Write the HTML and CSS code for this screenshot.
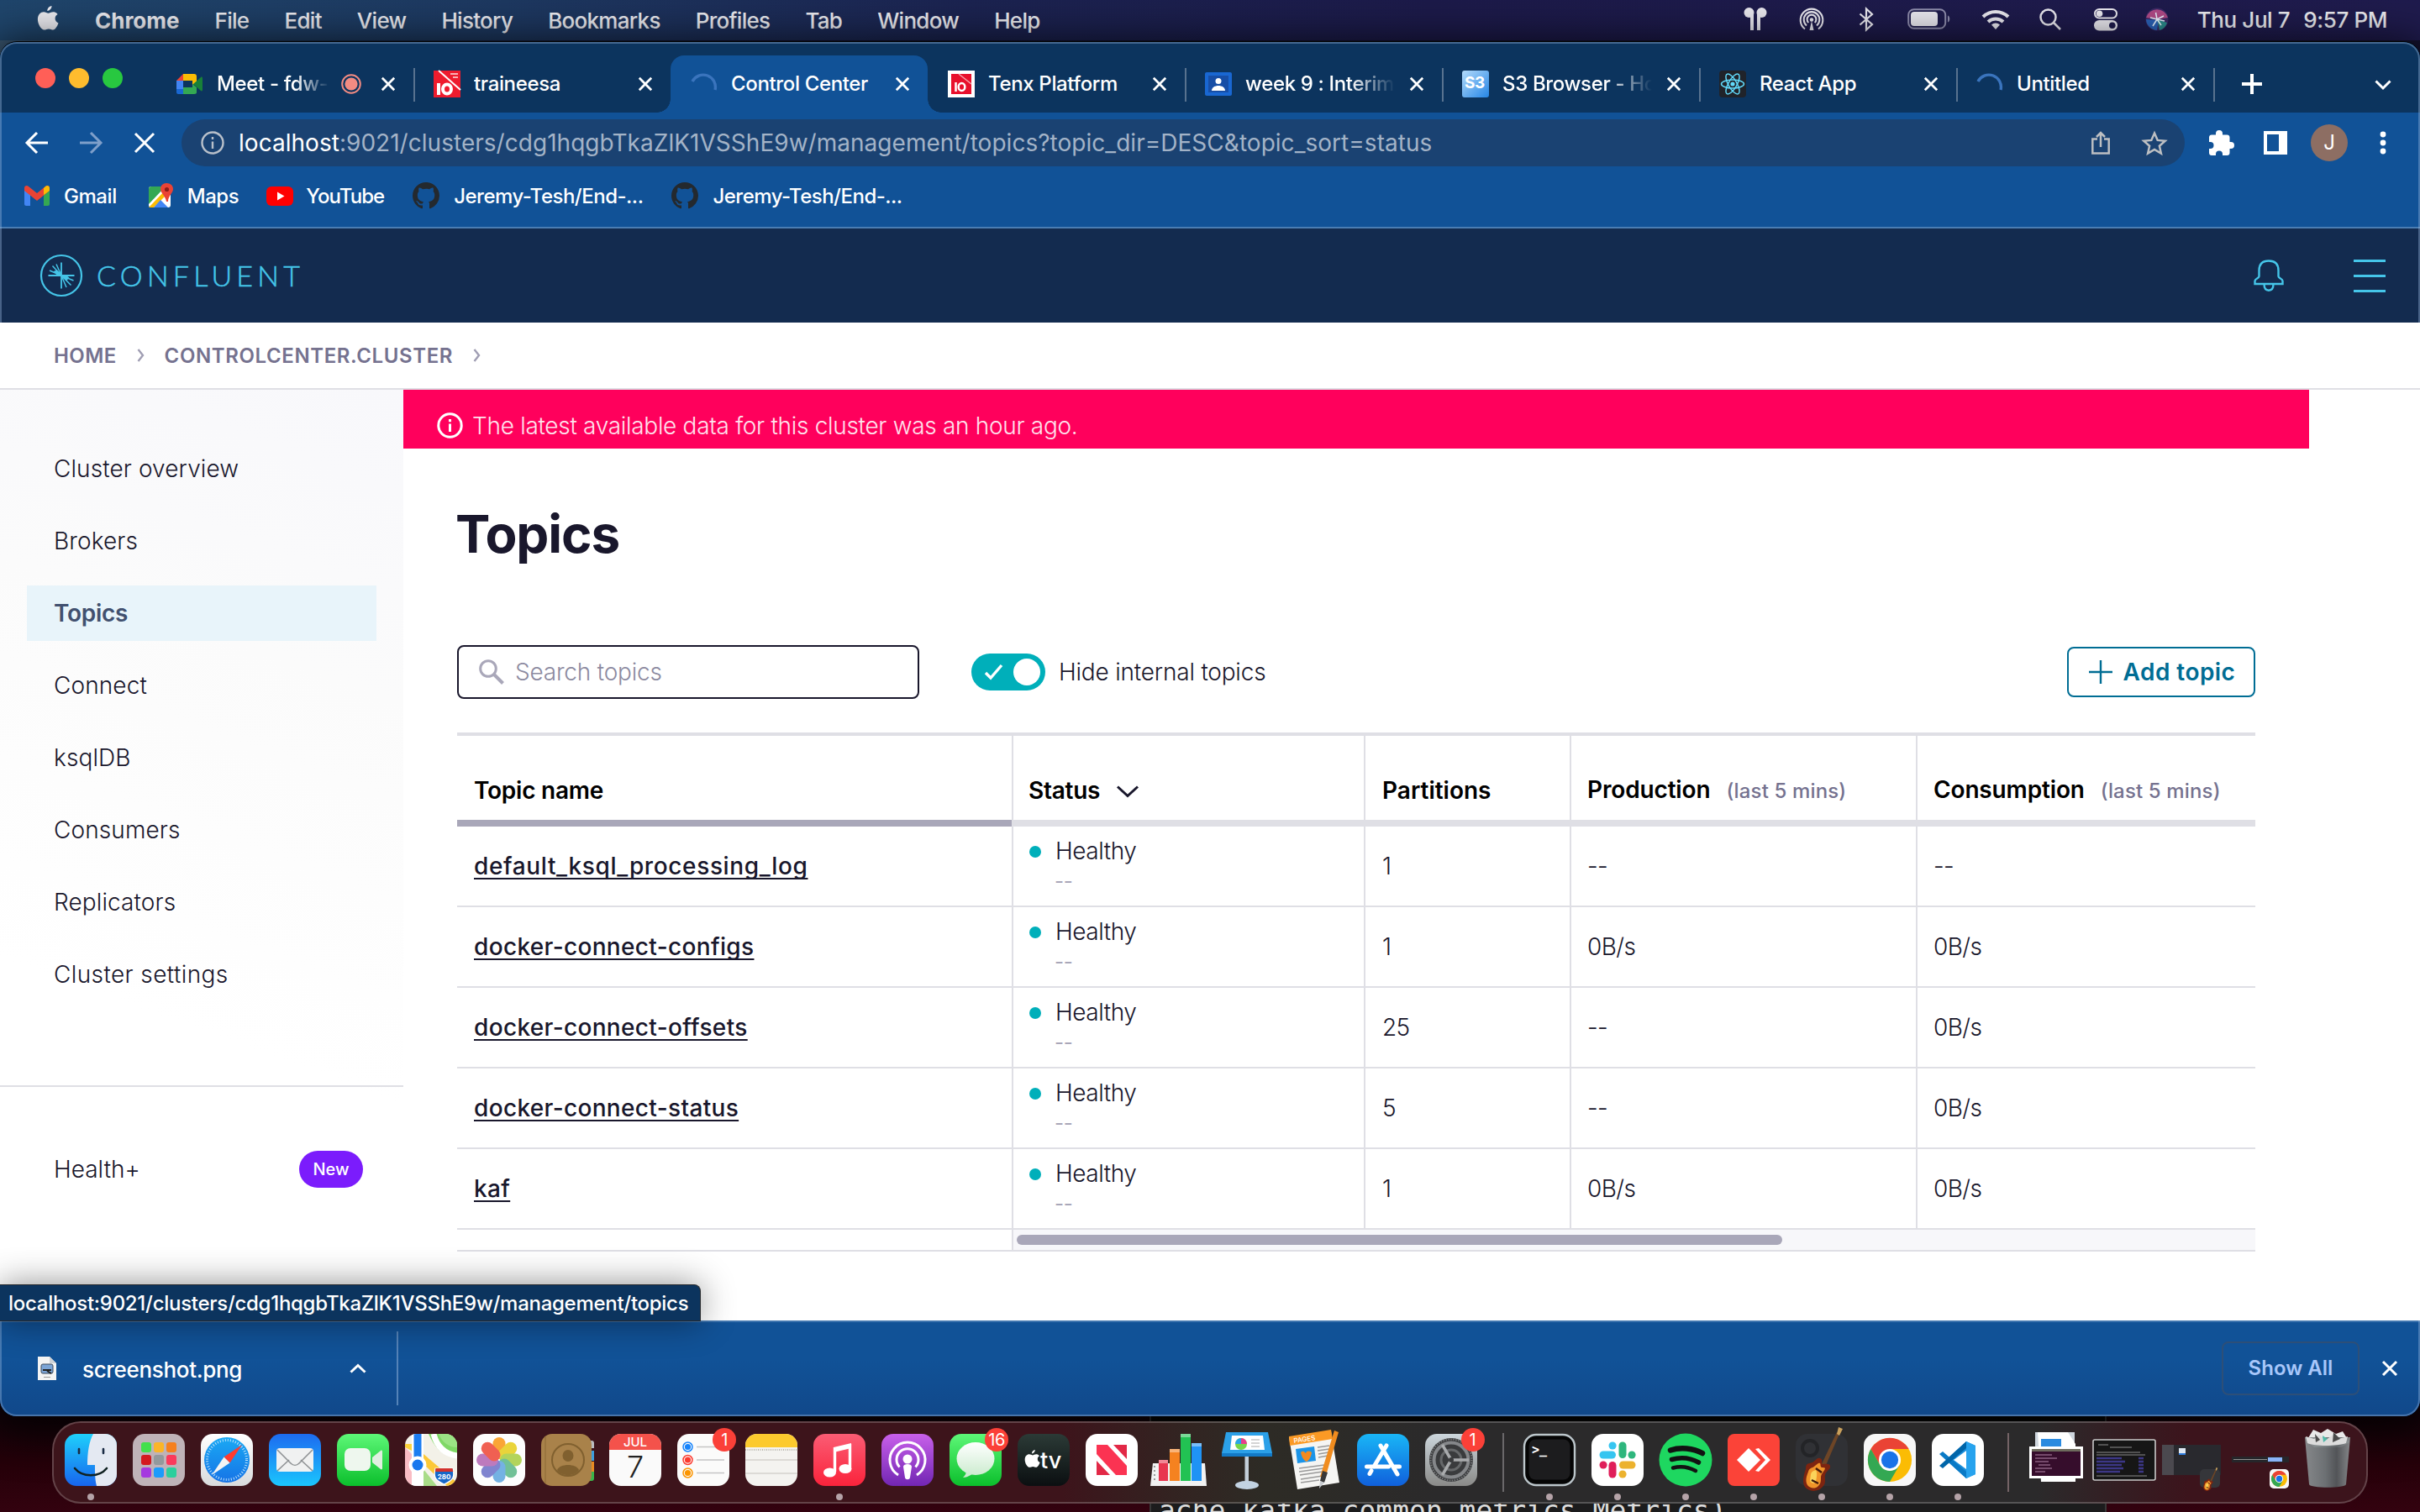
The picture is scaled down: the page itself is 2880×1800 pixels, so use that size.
FILE: index.html
```
<!DOCTYPE html>
<html lang="en">
<head>
<meta charset="utf-8">
<title>Control Center</title>
<link rel="stylesheet" href="styles.css">
</head>
<body>
<svg class="defs" width="0" height="0">
  <defs>
    <symbol id="x" viewBox="0 0 20 20"><path d="M2 2L18 18M18 2L2 18" stroke="currentColor" stroke-width="3" fill="none"/></symbol>
    <symbol id="github" viewBox="0 0 16 16"><path fill="#24292e" d="M8 0C3.58 0 0 3.58 0 8c0 3.54 2.29 6.53 5.47 7.59.4.07.55-.17.55-.38 0-.19-.01-.82-.01-1.49-2.01.37-2.53-.49-2.69-.94-.09-.23-.48-.94-.82-1.13-.28-.15-.68-.52-.01-.53.63-.01 1.08.58 1.23.82.72 1.21 1.87.87 2.33.66.07-.52.28-.87.51-1.07-1.78-.2-3.64-.89-3.64-3.95 0-.87.31-1.59.82-2.15-.08-.2-.36-1.02.08-2.12 0 0 .67-.21 2.2.82.64-.18 1.32-.27 2-.27s1.36.09 2 .27c1.53-1.04 2.2-.82 2.2-.82.44 1.1.16 1.92.08 2.12.51.56.82 1.27.82 2.15 0 3.07-1.87 3.75-3.65 3.95.29.25.54.73.54 1.48 0 1.07-.01 1.93-.01 2.2 0 .21.15.46.55.38A8.01 8.01 0 0 0 16 8c0-4.42-3.58-8-8-8z"/></symbol>
    <symbol id="spinner" viewBox="0 0 32 32"><path d="M2 13A14.5 14.5 0 0 1 29 23" stroke="#3a74bd" stroke-width="3.4" fill="none"/></symbol>
    <symbol id="apple" viewBox="0 0 26 32"><path fill="currentColor" d="M17.5 1c.2 2.900-2.400 6-5.200 6C12 4.200 14.700 1.300 17.500 1zM24.600 11c-2 1.200-3 2.800-3 5 0 2.600 1.500 4.500 3.900 5.500-.9 2.700-3.600 8-6.300 8-1.900 0-2.700-1.100-5.200-1.100s-3.400 1.100-5.200 1.100C4.700 29.500.9 22.500.9 17c0-5.500 3.500-8.700 7.100-8.700 2.300 0 4 1.400 5.500 1.400 1.300 0 3.200-1.500 6-1.500 1 0 3.500.2 5.100 2.800z"/></symbol>
    <symbol id="chrome" viewBox="0 0 60 60">
      <circle cx="30" cy="30" r="27" fill="#fbbc04"/>
      <path d="M6.600 16.500A27 27 0 0 1 53.400 16.500L30 16.500 18.300 36.800z" fill="#ea4335"/>
      <path d="M6.600 16.500L18.300 36.800 30 43.500 41.700 36.800 30 57A27 27 0 0 1 6.600 16.500z" fill="#34a853"/>
      <circle cx="30" cy="30" r="13.500" fill="#fff"/><circle cx="30" cy="30" r="10.500" fill="#1a73e8"/>
    </symbol>
    <symbol id="guitar" viewBox="0 0 60 76">
      <path d="M31 48L51 6l3 2-18 42z" fill="#6d4526"/><path d="M51 8l2-8 5 2-4 8z" fill="#c9a05c"/>
      <path d="M14 50c0-8 3-6 8-8 4-2 5-6 9-5 4 1 1 6 3 7 4 0 8-1 9 2 1 4-5 6-6 11-1 4 2 9-3 14-6 7-17 6-21 0-4-6-1-15 1-21z" fill="#7d2410"/>
      <path d="M17 53c1-5 5-4 8-7 3-2 4-4 6-3 1 1 0 4 2 5 2 0 4 0 4 1-1 4-5 6-5 11 0 4 0 7-3 10-4 4-10 3-13-1-3-5-1-11 1-16z" fill="#f0942a"/>
      <path d="M20 56c1-4 4-4 6-5 2 3 1 9 0 14-2 3-5 2-7-1z" fill="#fbd45a"/>
      <path d="M26 49l7 5M21 63l8 4" stroke="#3f1a0c" stroke-width="2.500"/>
    </symbol>
    <linearGradient id="g-finder" x2="0" y2="1"><stop stop-color="#1fd0fb"/><stop offset="1" stop-color="#1765ee"/></linearGradient>
    <linearGradient id="g-mail" x2="0" y2="1"><stop stop-color="#1d6bf0"/><stop offset="1" stop-color="#1bc6fd"/></linearGradient>
    <linearGradient id="g-green" x2="0" y2="1"><stop stop-color="#5df777"/><stop offset="1" stop-color="#0bbf2c"/></linearGradient>
    <linearGradient id="g-white" x2="0" y2="1"><stop stop-color="#fff"/><stop offset="1" stop-color="#d9dbdc"/></linearGradient>
    <linearGradient id="g-music" x2="0" y2="1"><stop stop-color="#fb5c74"/><stop offset="1" stop-color="#fa233b"/></linearGradient>
    <linearGradient id="g-pod" x2="0" y2="1"><stop stop-color="#c860ea"/><stop offset="1" stop-color="#7226b3"/></linearGradient>
    <linearGradient id="g-tv" x2="0" y2="1"><stop stop-color="#2b3a36"/><stop offset="1" stop-color="#0b0f11"/></linearGradient>
    <linearGradient id="g-store" x2="0" y2="1"><stop stop-color="#19b6f6"/><stop offset="1" stop-color="#1060dc"/></linearGradient>
    <linearGradient id="g-pref" x2="0" y2="1"><stop stop-color="#ccd6dc"/><stop offset="1" stop-color="#8a8a88"/></linearGradient>
    <linearGradient id="g-safari" x2="0" y2="1"><stop stop-color="#1aa9f4"/><stop offset="1" stop-color="#1673e6"/></linearGradient>
    <linearGradient id="g-bubble" x2="0" y2="1"><stop stop-color="#fff"/><stop offset="1" stop-color="#cdecd0"/></linearGradient>
    <linearGradient id="g-trash" x2="1" y2="0"><stop stop-color="#8b9092"/><stop offset=".45" stop-color="#70777a"/><stop offset=".7" stop-color="#54595c"/><stop offset="1" stop-color="#8b9092"/></linearGradient>
    <linearGradient id="g-s3" x2="1" y2="1"><stop stop-color="#b4dbfb"/><stop offset="1" stop-color="#2586e6"/></linearGradient>
    <clipPath id="tile"><rect width="62" height="62" rx="14"/></clipPath>
  </defs>
</svg>

<header class="menubar">
  <nav class="menubar-left">
    <svg class="apple" width="26" height="32"><use href="#apple"/></svg>
    <span class="app-name">Chrome</span><span>File</span><span>Edit</span><span>View</span><span>History</span><span>Bookmarks</span><span>Profiles</span><span>Tab</span><span>Window</span><span>Help</span>
  </nav>
  <div class="menubar-right">
    <svg class="airpods" width="28" height="28" viewBox="0 0 28 28" fill="#e9e8ef"><ellipse cx="6.500" cy="6" rx="6" ry="6"/><ellipse cx="21.500" cy="6" rx="6" ry="6"/><path d="M8 8h4v19H8zM16 8h4v19h-4z"/></svg>
    <svg class="airdrop" width="30" height="28" viewBox="0 0 30 28" fill="none" stroke="#e9e8ef" stroke-width="2.100"><path d="M7 25.500A13.300 13.300 0 1 1 23 25.500M9 21.500A9.300 9.300 0 1 1 21 21.500M11.300 18A5.400 5.400 0 1 1 18.700 18"/><path d="M12.500 27l2.500-11 2.500 11z" fill="#e9e8ef" stroke="none"/><circle cx="15" cy="14.500" r="2.200" fill="#e9e8ef" stroke="none"/></svg>
    <svg class="bluetooth" width="18" height="28" viewBox="0 0 18 28" fill="none" stroke="#e9e8ef" stroke-width="2.200"><path d="M1.500 7.500L16 20 9 26.500V1.500L16 8 1.500 20.500"/></svg>
    <svg class="battery" width="52" height="26" viewBox="0 0 52 26"><rect x="1.200" y="1.200" width="44" height="22.600" rx="6.500" fill="none" stroke="#8f8dad" stroke-width="2"/><rect x="4" y="4" width="32" height="17" rx="4" fill="#e9e8ef"/><path d="M48 8.500c3 1 3 7 0 8z" fill="#8f8dad"/></svg>
    <svg class="wifi" width="34" height="24" viewBox="0 0 34 24" fill="none" stroke="#e9e8ef" stroke-width="4"><path d="M2 9A21.500 21.500 0 0 1 32 9"/><path d="M8 15A13 13 0 0 1 26 15"/><path d="M12 18.500L17 24l5-5.500a7.500 7.500 0 0 0-10 0z" fill="#e9e8ef" stroke="none"/></svg>
    <svg class="spotlight" width="26" height="26" viewBox="0 0 26 26" fill="none" stroke="#e9e8ef" stroke-width="2.500"><circle cx="10.500" cy="10.500" r="9"/><path d="M17 17l8 8"/></svg>
    <svg class="switches" width="28" height="27" viewBox="0 0 28 27"><rect x="1" y="1" width="26" height="10.500" rx="5.200" fill="none" stroke="#e9e8ef" stroke-width="2"/><circle cx="6.500" cy="6.200" r="3.800" fill="#e9e8ef"/><rect y="14" width="28" height="12.500" rx="6.200" fill="#e9e8ef"/><circle cx="21.800" cy="20.200" r="3.800" fill="#1e1b4c"/></svg>
    <svg width="28" height="28" viewBox="0 0 28 28"><circle cx="14" cy="14" r="13.500" fill="#3c2a66"/><path d="M1 12A13.500 13.500 0 0 1 27 12L14 14z" fill="#b04a86"/><path d="M1 14a13.500 13.500 0 0 0 13 13l2-12z" fill="#2a62b8"/><path d="M14 14l12 4a13 13 0 0 1-9 9z" fill="#2b8c8c"/><path d="M6 12l8 2 8-4M14 14l-5 8M14 14l5 7M12.500 6l1.500 8 9 2" stroke="#e9f3ff" stroke-width="1.500" fill="none"/></svg>
    <span class="clock"><span>Thu Jul 7</span><span>9:57 PM</span></span>
  </div>
</header>

<div class="terminal-window"><span>ache.kafka.common.metrics.Metrics)</span></div>

<div class="window">
  <div class="tabstrip">
    <div class="lights"><i class="red"></i><i class="yellow"></i><i class="green"></i></div>
    <div class="tab"><svg class="fav" viewBox="0 0 32 32"><path d="M0 12l8-8v8z" fill="#ea4335"/><path d="M8 4h13c2 0 3 1 3 3v7l-5 3v-5H8z" fill="#fbbc04"/><path d="M0 12h8v12H0z" fill="#4285f4"/><path d="M0 22h8v6H2c-1 0-2-1-2-2z" fill="#1967d2"/><path d="M8 20h11v-4l5 4v6c0 1-1 2-3 2H8z" fill="#34a853"/><path d="M20 16l9-8c1-1 2 0 2 1v14c0 1-1 2-2 1z" fill="#188038"/></svg><span class="tab-title t-meet">Meet - fdw-</span><svg class="rec" viewBox="0 0 24 24"><circle cx="12" cy="12" r="10.800" fill="none" stroke="#f28b82" stroke-width="2"/><circle cx="12" cy="12" r="7.600" fill="#f28b82"/></svg><svg class="close"><use href="#x"/></svg></div>
    <div class="tab sep"><svg class="fav" viewBox="0 0 32 32"><rect width="32" height="32" fill="#ee1c2e"/><path d="M6 0l26 23" stroke="#fff" stroke-width="2"/><path d="M6 15v14" stroke="#fff" stroke-width="4"/><ellipse cx="16" cy="22" rx="5" ry="5.500" fill="none" stroke="#fff" stroke-width="4"/><path d="M20 4h9M23 8h6" stroke="#f9b0b5" stroke-width="2"/></svg><span class="tab-title">traineesa</span><svg class="close"><use href="#x"/></svg></div>
    <div class="tab active"><svg class="fav"><use href="#spinner"/></svg><span class="tab-title">Control Center</span><svg class="close"><use href="#x"/></svg></div>
    <div class="tab"><svg class="fav" viewBox="0 0 32 32"><rect width="32" height="32" fill="#fff"/><rect x="4" y="4" width="24" height="24" fill="#e8102c"/><path d="M13 4l15 12" stroke="#f7a3ac" stroke-width="1.500"/><path d="M9.500 14v11" stroke="#fff" stroke-width="2.500"/><ellipse cx="16.500" cy="19.500" rx="3.800" ry="4.500" fill="none" stroke="#fff" stroke-width="2.500"/></svg><span class="tab-title">Tenx Platform</span><svg class="close"><use href="#x"/></svg></div>
    <div class="tab sep"><svg class="fav" viewBox="0 0 32 32"><rect y="2" width="32" height="28" rx="2" fill="#1967d2"/><rect x="4" y="6" width="24" height="20" fill="#174ea6"/><circle cx="16" cy="12.500" r="3.500" fill="#fff"/><path d="M8 24c0-8 16-8 16 0z" fill="#fff"/></svg><span class="tab-title fade">week 9 : Interim</span><svg class="close"><use href="#x"/></svg></div>
    <div class="tab sep"><svg class="fav" viewBox="0 0 32 32"><rect width="32" height="32" rx="3" fill="url(#g-s3)"/><text x="15" y="21" text-anchor="middle" class="s3">S3</text></svg><span class="tab-title fade">S3 Browser - Ho</span><svg class="close"><use href="#x"/></svg></div>
    <div class="tab sep"><svg class="fav" viewBox="0 0 32 32"><rect width="32" height="32" rx="4" fill="#20232a"/><g fill="none" stroke="#61dafb" stroke-width="1.500"><ellipse cx="16" cy="16" rx="13.500" ry="5"/><ellipse cx="16" cy="16" rx="13.500" ry="5" transform="rotate(60 16 16)"/><ellipse cx="16" cy="16" rx="13.500" ry="5" transform="rotate(120 16 16)"/></g><circle cx="16" cy="16" r="2.600" fill="#61dafb"/></svg><span class="tab-title">React App</span><svg class="close"><use href="#x"/></svg></div>
    <div class="tab sep last"><svg class="fav"><use href="#spinner"/></svg><span class="tab-title">Untitled</span><svg class="close"><use href="#x"/></svg></div>
    <svg class="newtab" width="24" height="24" viewBox="0 0 24 24"><path d="M12 0v24M0 12h24" stroke="#fff" stroke-width="4"/></svg>
    <svg class="tabmenu" width="20" height="12" viewBox="0 0 20 12"><path d="M1.500 1.500L10 10l8.500-8.500" stroke="#fff" stroke-width="3" fill="none"/></svg>
  </div>

  <div class="toolbar">
    <svg width="28" height="28" viewBox="0 0 28 28" fill="none" stroke="#fff" stroke-width="3"><path d="M27 14H3M14 2L2 14l12 12"/></svg>
    <svg width="28" height="28" viewBox="0 0 28 28" fill="none" stroke="#7f9fca" stroke-width="3"><path d="M1 14h24M14 2l12 12-12 12"/></svg>
    <svg width="26" height="26" viewBox="0 0 26 26" fill="none" stroke="#fff" stroke-width="3"><path d="M2 2l22 22M24 2L2 24"/></svg>
    <div class="omnibox">
      <svg width="28" height="28" viewBox="0 0 28 28" fill="none" stroke="#b9c0ca" stroke-width="2.400"><circle cx="14" cy="14" r="12.500"/><path d="M14 12.500V21M14 7v3"/></svg>
      <span class="url"><b>localhost</b>:9021/clusters/cdg1hqgbTkaZlK1VSShE9w/management/topics?topic_dir=DESC&amp;topic_sort=status</span>
      <svg width="22" height="28" viewBox="0 0 22 28" fill="none" stroke="#bdbfc2" stroke-width="2.500"><path d="M7 9.500H1.300v17h19.400v-17H15M11 19V2M6 7l5-5 5 5"/></svg>
      <svg width="30" height="28" viewBox="0 0 30 28" fill="none" stroke="#bdbfc2" stroke-width="2.500"><path d="M15 2.500l3.700 8.400 9 .8-6.800 6 2 8.900L15 21.900l-7.900 4.700 2-8.900-6.800-6 9-.8z"/></svg>
    </div>
    <svg class="puzzle" width="30" height="30" viewBox="0 0 30 30"><path fill="#fff" d="M27 14h-1.500V8.500c0-1.700-1.300-3-3-3H17V4a4 4 0 0 0-8 0v1.500H4c-1.700 0-3 1.300-3 3V14h1.500a4 4 0 0 1 0 8H1v5c0 1.700 1.300 3 3 3h5v-1.500a4 4 0 0 1 8 0V30h5.500c1.700 0 3-1.300 3-3v-5H27a4 4 0 0 0 0-8z"/></svg>
    <svg width="28" height="28" viewBox="0 0 28 28"><path fill="#fff" fill-rule="evenodd" d="M0 0h28v28H0zM4 4v20h14V4z"/></svg>
    <span class="avatar">J</span>
    <svg class="kebab" width="8" height="28" viewBox="0 0 8 28" fill="#fff"><circle cx="4" cy="4" r="3.400"/><circle cx="4" cy="14" r="3.400"/><circle cx="4" cy="24" r="3.400"/></svg>
  </div>

  <div class="bookmarks">
    <a><svg width="30" height="24" viewBox="0 0 30 24"><path d="M0 4v18c0 1 1 2 2 2h5V11z" fill="#4285f4"/><path d="M30 4v18c0 1-1 2-2 2h-5V11z" fill="#34a853"/><path d="M0 3c0-3 3-4 5-2l10 8L25 1c2-2 5-1 5 2v3L15 18 0 6z" fill="#ea4335"/><path d="M23 3l2-2c2-2 5-1 5 2v3l-7 5z" fill="#fbbc04"/></svg>Gmail</a>
    <a class="maps"><svg width="30" height="30" viewBox="0 0 30 30"><rect y="4" width="26" height="25" rx="3" fill="#fff"/><path d="M0 7c0-2 1-3 3-3h17L0 25z" fill="#34a853"/><path d="M0 29L22 6l3 4L6 29z" fill="#fbbc04"/><path d="M6 29l8-9 9 9z" fill="#4285f4"/><path d="M21 0c5 0 8 3 8 7 0 5-6 8-6 15h-2c-1-7-7-10-7-15 0-4 3-7 7-7z" fill="#ea4335"/><circle cx="21.500" cy="7.500" r="2.600" fill="#8c1d18"/></svg>Maps</a>
    <a class="youtube"><svg width="32" height="23" viewBox="0 0 32 23"><rect width="32" height="23" rx="6" fill="#f00"/><path d="M13 6.500v10l8.500-5z" fill="#fff"/></svg>YouTube</a>
    <a class="repo"><svg width="32" height="32"><use href="#github"/></svg>Jeremy-Tesh/End-...</a>
    <a class="repo"><svg width="32" height="32"><use href="#github"/></svg>Jeremy-Tesh/End-...</a>
  </div>

  <div class="app-header">
    <svg width="50" height="50" viewBox="0 0 50 50" fill="none" stroke="#45c5e8"><circle cx="25" cy="25" r="24" stroke-width="2.200"/><g stroke-width="1.800"><path d="M25 9.500v31M9.500 25h31"/><path d="M25 25L19 11.500M25 25L14.500 13.500M25 25L11 19M25 25L31 39M25 25L36.500 36.500M25 25l14.500 6" stroke-width="1.500"/></g><path d="M25 25l-5-6.500-4.500 1.500 4.500 5zM25 25l6 6.500 3.500-4-3.500-2.500z" fill="#45c5e8" stroke="none"/></svg>
    <span class="wordmark">CONFLUENT</span>
    <svg class="bell" width="36" height="38" viewBox="0 0 36 38" fill="none" stroke="#45c5e8" stroke-width="2.400"><path d="M6.500 20v-7C6.500 6 10 1.500 18 1.500S29.500 6 29.500 13v7c0 2.500 5 2.500 5 5.500V29h-33v-3.500c0-3 5-3 5-5.500z"/><path d="M12.500 29c0 5 2 7.700 5.500 7.700s5.500-2.700 5.500-7.700"/></svg>
    <span class="burger"><i></i><i></i><i></i></span>
  </div>
  <div class="crumbs">
    <span class="home">HOME</span><svg width="9" height="16" viewBox="0 0 9 16"><path d="M1.500 1l5.500 7-5.500 7" fill="none" stroke="#a09eb3" stroke-width="2.400"/></svg><span class="cluster">CONTROLCENTER.CLUSTER</span><svg width="9" height="16" viewBox="0 0 9 16"><path d="M1.500 1l5.500 7-5.500 7" fill="none" stroke="#a09eb3" stroke-width="2.400"/></svg>
  </div>

  <div class="page">
    <aside class="sidebar">
      <nav class="sidenav">
        <a>Cluster overview</a><a>Brokers</a><a class="current">Topics</a><a>Connect</a><a>ksqlDB</a><a>Consumers</a><a>Replicators</a><a class="settings">Cluster settings</a>
      </nav>
      <div class="health"><span>Health+</span><span class="badge">New</span></div>
    </aside>
    <main class="content">
      <div class="alert"><svg width="31" height="31" viewBox="0 0 31 31" fill="none" stroke="#fff" stroke-width="3"><circle cx="15.500" cy="15.500" r="13.700"/><path d="M15.500 13.500V23M15.500 8v3.200"/></svg><span>The latest available data for this cluster was an hour ago.</span></div>
      <h1>Topics</h1>
      <div class="controls">
        <div class="search"><svg width="30" height="30" viewBox="0 0 30 30" fill="none" stroke="#a9a7b9" stroke-width="3"><circle cx="11" cy="11" r="9.300"/><path d="M17.500 17.500L28.500 28.500" stroke-width="4"/></svg><span>Search topics</span></div>
        <div class="toggle"><svg width="24" height="20" viewBox="0 0 24 20"><path d="M2 11l6 6L21 2" fill="none" stroke="#fff" stroke-width="3.400"/></svg><i></i></div>
        <span class="toggle-label">Hide internal topics</span>
        <button class="add"><svg width="28" height="28" viewBox="0 0 28 28"><path d="M14 0v28M0 14h28" stroke="#006d94" stroke-width="2.400"/></svg>Add topic</button>
      </div>
      <div class="table">
        <div class="thead">
          <div class="name">Topic name</div><div>Status<svg class="sort" width="28" height="14" viewBox="0 0 28 14"><path d="M2 1.500l12 11 12-11" fill="none" stroke="#19172c" stroke-width="3"/></svg></div><div class="parts">Partitions</div><div>Production<small>(last 5 mins)</small></div><div>Consumption<small>(last 5 mins)</small></div>
        </div>
        <div class="row"><div><a class="long">default_ksql_processing_log</a></div><div class="status"><p>Healthy</p><small>--</small></div><div>1</div><div>--</div><div>--</div></div>
        <div class="row"><div><a>docker-connect-configs</a></div><div class="status"><p>Healthy</p><small>--</small></div><div>1</div><div>0B/s</div><div>0B/s</div></div>
        <div class="row"><div><a>docker-connect-offsets</a></div><div class="status"><p>Healthy</p><small>--</small></div><div>25</div><div>--</div><div>0B/s</div></div>
        <div class="row"><div><a>docker-connect-status</a></div><div class="status"><p>Healthy</p><small>--</small></div><div>5</div><div>--</div><div>0B/s</div></div>
        <div class="row"><div><a>kaf</a></div><div class="status"><p>Healthy</p><small>--</small></div><div>1</div><div>0B/s</div><div>0B/s</div></div>
        <div class="scroll"><div class="track"><i></i></div></div>
      </div>
    </main>
    <div class="link-status">localhost:9021/clusters/cdg1hqgbTkaZlK1VSShE9w/management/topics</div>
  </div>

  <footer class="downloads">
    <div class="download"><svg width="22" height="28" viewBox="0 0 22 28"><path d="M0 0h14l8 8v20H0z" fill="#f4f4f4"/><path d="M14 0l8 8h-8z" fill="#cfd2d6"/><rect x="4" y="9" width="14" height="11" rx="2" fill="#7ba4d6" stroke="#3d4a5c"/><path d="M6 16h10M11 17l5 3" stroke="#222" stroke-width="2"/><path d="M7 24.500h8" stroke="#999"/></svg><span>screenshot.png</span><svg class="up" width="20" height="12" viewBox="0 0 20 12"><path d="M1.500 10.500L10 2.500l8.500 8" stroke="#fff" stroke-width="3" fill="none"/></svg></div>
    <span class="show-all">Show All</span>
    <svg class="close-bar" width="20" height="20"><use href="#x"/></svg>
  </footer>
</div>

<div class="dock">
  <div class="app run"><svg viewBox="0 0 62 62"><g clip-path="url(#tile)"><rect width="62" height="62" fill="url(#g-finder)"/><path d="M34 0h28v62H38c-2-8-2-14-2-25h-9C27 22 29 9 34 0z" fill="#e4e9f2"/><path d="M17 18v5M46 18v5" stroke="#1a2b44" stroke-width="2.600" stroke-linecap="round"/><path d="M12 41c9 11 29 11 38 0" fill="none" stroke="#122" stroke-width="2.600" stroke-linecap="round"/></g></svg></div>
  <div class="app"><svg viewBox="0 0 62 62"><rect width="62" height="62" rx="14" fill="#bfb3b8"/><g><rect x="10" y="10" width="12" height="12" rx="3" fill="#43e04c"/><rect x="25" y="10" width="12" height="12" rx="3" fill="#fbb528"/><rect x="40" y="10" width="12" height="12" rx="3" fill="#f5801f"/><rect x="10" y="25" width="12" height="12" rx="3" fill="#d41a1f"/><rect x="25" y="25" width="12" height="12" rx="3" fill="#93999c"/><rect x="40" y="25" width="12" height="12" rx="3" fill="#fb3a5c"/><rect x="10" y="40" width="12" height="12" rx="3" fill="#a53adf"/><rect x="25" y="40" width="12" height="12" rx="3" fill="#1b9bfb"/><rect x="40" y="40" width="12" height="12" rx="3" fill="#2ccf9c"/></g></svg></div>
  <div class="app"><svg viewBox="0 0 62 62"><rect width="62" height="62" rx="14" fill="url(#g-white)"/><circle cx="31" cy="31" r="27" fill="url(#g-safari)"/><circle cx="31" cy="31" r="23.500" fill="none" stroke="#bfe3fb" stroke-width="3" stroke-dasharray="1 2.080"/><path d="M49 13L34.500 34.500l-7-7z" fill="#ff3b30"/><path d="M13 49l14.500-21.500 7 7z" fill="#f4f4f4"/></svg></div>
  <div class="app"><svg viewBox="0 0 62 62"><rect width="62" height="62" rx="14" fill="url(#g-mail)"/><rect x="9" y="17" width="44" height="28" rx="4" fill="#f0f1f1"/><path d="M10 19l16 16c3 3 7 3 10 0l16-16M10 44l14-13M52 44L38 31" fill="none" stroke="#8f9294" stroke-width="1.600"/></svg></div>
  <div class="app"><svg viewBox="0 0 62 62"><rect width="62" height="62" rx="14" fill="url(#g-green)"/><rect x="9" y="17" width="31" height="27" rx="7" fill="#eef7ee"/><path d="M42 28l10-8c1-1 2 0 2 1v20c0 1-1 2-2 1l-10-8z" fill="#e0efe0"/></svg></div>
  <div class="app"><svg viewBox="0 0 62 62"><g clip-path="url(#tile)"><rect width="62" height="62" fill="#f3f1e8"/><path d="M28 0h34v26C46 28 36 18 28 0z" fill="#7fd866"/><path d="M40 0h22v16c-10 0-18-6-22-16z" fill="#9be384"/><path d="M34 0c4 16 13 24 28 26" stroke="#fff" stroke-width="7" fill="none"/><path d="M0 12h12v10L0 16z" fill="#fcd33c"/><path d="M22 24l40 34v4H50L22 36z" fill="#fcc838"/><path d="M0 16l8 8v38H0z" fill="#f9bcc4"/><path d="M22 42l16 20H22z" fill="#a9dc88"/><path d="M15 0v36" stroke="#fff" stroke-width="14"/><path d="M15 0v34" stroke="#1c7df0" stroke-width="9"/><path d="M15 40v22" stroke="#fff" stroke-width="14"/><circle cx="15" cy="37" r="10.500" fill="#fff"/><circle cx="15" cy="37" r="6.500" fill="#1877ee"/></g><path d="M36 41h21c2 10 1 14-10.500 19C35 55 34 51 36 41z" fill="#1667c8" stroke="#fff" stroke-width="1.200"/><path d="M36.500 41h20l.8 4H36z" fill="#d2322d"/><text x="46.500" y="53.500" text-anchor="middle" class="shield">280</text></svg></div>
  <div class="app"><svg viewBox="0 0 62 62"><rect width="62" height="62" rx="14" fill="#fdfdfd"/><g opacity=".88"><rect x="23.500" y="4" width="15" height="26" rx="7.500" fill="#fa9a1b"/><rect x="23.500" y="4" width="15" height="26" rx="7.500" fill="#e8cf20" transform="rotate(45 31 31)"/><rect x="23.500" y="4" width="15" height="26" rx="7.500" fill="#a9cf45" transform="rotate(90 31 31)"/><rect x="23.500" y="4" width="15" height="26" rx="7.500" fill="#5fb98a" transform="rotate(135 31 31)"/><rect x="23.500" y="4" width="15" height="26" rx="7.500" fill="#62a8e0" transform="rotate(180 31 31)"/><rect x="23.500" y="4" width="15" height="26" rx="7.500" fill="#6f74c9" transform="rotate(225 31 31)"/><rect x="23.500" y="4" width="15" height="26" rx="7.500" fill="#b568b5" transform="rotate(270 31 31)"/><rect x="23.500" y="4" width="15" height="26" rx="7.500" fill="#ef4b3b" transform="rotate(315 31 31)"/></g></svg></div>
  <div class="app"><svg viewBox="0 0 62 62"><path d="M56 8h4c2 0 3 1 3 3v6h-7z" fill="#b9bcc0"/><path d="M56 20h7v12h-7z" fill="#3c9ede"/><path d="M56 33h7v12h-7z" fill="#e88b22"/><path d="M56 45h7v8c0 2-1 3-3 3h-4z" fill="#38b54a"/><rect width="60" height="62" rx="13" fill="#a9824a"/><path d="M5 3v56" stroke="#96713c" stroke-width="1.500"/><circle cx="32" cy="31" r="19" fill="none" stroke="#80602f" stroke-width="2"/><ellipse cx="32" cy="26" rx="6.500" ry="7" fill="#80602f"/><path d="M19 43c3-8 23-8 26 0-5 8-21 8-26 0z" fill="#80602f"/></svg></div>
  <div class="app"><svg viewBox="0 0 62 62"><g clip-path="url(#tile)"><rect width="62" height="62" fill="#fafafa"/><rect width="62" height="19" fill="#f4524b"/></g><text x="31" y="14.500" text-anchor="middle" class="cal-m">JUL</text><text x="31" y="52" text-anchor="middle" class="cal-d">7</text></svg></div>
  <div class="app"><svg viewBox="0 0 62 62"><rect width="62" height="62" rx="14" fill="#fbfbfa"/><g fill="none" stroke-width="1.500"><circle cx="12.500" cy="15.500" r="5.500" stroke="#1683fb"/><circle cx="12.500" cy="31" r="5.500" stroke="#fb3b30"/><circle cx="12.500" cy="46.500" r="5.500" stroke="#fb9500"/><path d="M23 15.500h33M23 31h33M23 46.500h33" stroke="#c5c5c5"/></g><circle cx="12.500" cy="15.500" r="3.600" fill="#1683fb"/><circle cx="12.500" cy="31" r="3.600" fill="#fb3b30"/><circle cx="12.500" cy="46.500" r="3.600" fill="#fb9500"/></svg><span class="count">1</span></div>
  <div class="app"><svg viewBox="0 0 62 62"><g clip-path="url(#tile)"><rect width="62" height="62" fill="#f4f3f0"/><rect width="62" height="16" fill="#fcca2e"/><path d="M0 19h62" stroke="#b9b6ae" stroke-width="2" stroke-dasharray="1 1.500"/><path d="M0 31h62M0 47h62" stroke="#d4d2cd" stroke-width="1.500"/></g></svg></div>
  <div class="app run"><svg viewBox="0 0 62 62"><rect width="62" height="62" rx="14" fill="url(#g-music)"/><path d="M24 16l21-5v6l-21 5z" fill="#fff"/><path d="M25.500 16v29M43.500 12v28" stroke="#fff" stroke-width="3.400"/><ellipse cx="19.500" cy="46" rx="7.500" ry="5.500" fill="#fff"/><ellipse cx="38" cy="41.500" rx="7.500" ry="5.500" fill="#fff"/></svg></div>
  <div class="app"><svg viewBox="0 0 62 62"><rect width="62" height="62" rx="14" fill="url(#g-pod)"/><g fill="none" stroke="#fff" stroke-width="3"><path d="M20 49a21 21 0 1 1 22 0"/><path d="M21.500 39.500a13 13 0 1 1 19 0"/></g><circle cx="31" cy="30" r="5.500" fill="#fff"/><path d="M26 39c0-4 10-4 10 0l-2 13c-.5 3-5.500 3-6 0z" fill="#fff"/></svg></div>
  <div class="app"><svg viewBox="0 0 62 62"><rect width="62" height="62" rx="14" fill="url(#g-green)"/><path d="M20 43c0 5-2 7-4 9 5 0 9-3 12-5z" fill="#cdecd0"/><ellipse cx="31" cy="29.500" rx="22.500" ry="19.500" fill="url(#g-bubble)"/></svg><span class="count wide">16</span></div>
  <div class="app"><svg viewBox="0 0 62 62"><rect width="62" height="62" rx="14" fill="url(#g-tv)"/><svg x="8" y="18" width="19" height="24" color="#fff"><use href="#apple"/></svg><text x="27" y="41" class="tv">tv</text></svg></div>
  <div class="app"><svg viewBox="0 0 62 62"><rect width="62" height="62" rx="14" fill="#fff"/><path d="M13 13h13l23 25v11H36L13 24z" fill="#fb3352"/><path d="M33 13h16v17zM13 32v17h16z" fill="#e22846"/></svg></div>
  <div class="app"><svg viewBox="0 0 62 62"><path d="M0 35h62l2 27H-3z" fill="#f2f2f2"/><path d="M2 38v20" stroke="#999" stroke-width="2" stroke-dasharray="2 3"/><rect x="7" y="31" width="11" height="25" fill="#e8364f"/><rect x="20" y="18" width="12" height="38" fill="#f58220"/><rect x="33" y="0" width="12" height="56" fill="#22c253"/><rect x="46" y="11" width="12" height="45" fill="#1f93f5"/><path d="M7 31h11v4H7zM20 18h12v4H20zM33 0h12v4H33zM46 11h12v4H46z" fill="#fff" opacity=".4"/></svg></div>
  <div class="app"><svg viewBox="0 0 62 62"><rect x="28.500" y="24" width="4.500" height="38" fill="#c4cfd9"/><ellipse cx="31" cy="61" rx="14" ry="5" fill="#c3d3e2"/><path d="M6-2h50l5 25v4H1v-4z" fill="#2ba0e8"/><path d="M1 23h60v4H1z" fill="#1279c6"/><path d="M13 2h37l2 17H11z" fill="#fff"/><circle cx="24" cy="12" r="7" fill="#76d64b"/><path d="M24 12V5a7 7 0 0 0-7 7z" fill="#2aa5e8"/><path d="M24 12V5a7 7 0 0 1 7 7z" fill="#e83e8c"/><path d="M36 7h10M36 11h10M36 15h10" stroke="#aaa"/></svg></div>
  <div class="app"><svg viewBox="0 0 62 62"><path d="M0 4l50-7 10 61-50 8z" fill="#f5f5f3"/><path d="M0 3l50-8 2 11L1 14z" fill="#fb9a25"/><text x="6" y="11" transform="rotate(-8 6 11)" class="pages">PAGES</text><path d="M8 18l22-3 2 17-22 3z" fill="#1b94e8"/><path d="M14 22c3-3 5 0 6 1 1-3 4-3 7-1-1 7-4 10-6 11-4-2-6-6-7-11z" fill="#f58a1f"/><path d="M34 16l14-2M34 20l14-2M35 24l12-2M35 28l11-2M12 41l30-4M12 45l29-4M13 49l27-4M14 54l26-4M14 58l22-3" stroke="#9a9a9a" stroke-width="1.300"/><path d="M54-4l5 2-16 55-6-2z" fill="#f08c1f"/><path d="M40 44l6 2-4 12-5-2z" fill="#383838"/><path d="M37 56l5 2-6 7z" fill="#c8ccd0"/></svg></div>
  <div class="app"><svg viewBox="0 0 62 62"><rect width="62" height="62" rx="14" fill="url(#g-store)"/><g stroke="#fff" stroke-width="5" stroke-linecap="round"><path d="M35 14L20 39M28 14l20 34M11.500 39h26M45 39h5.500M17 44l-2 3.500"/></g></svg></div>
  <div class="app"><svg viewBox="0 0 62 62"><rect width="62" height="62" rx="14" fill="url(#g-pref)"/><circle cx="31" cy="31" r="26" fill="#3a3b3d"/><circle cx="31" cy="31" r="20.500" fill="none" stroke="#85878a" stroke-width="4"/><circle cx="31" cy="31" r="24.500" fill="none" stroke="#77797b" stroke-width="2" stroke-dasharray="1.500 1.500"/><circle cx="31" cy="31" r="12" fill="none" stroke="#66686a" stroke-width="3"/><path d="M31 31h21M31 31L20.500 13M31 31L20.500 49" stroke="#a9abad" stroke-width="3.500"/><circle cx="31" cy="31" r="3" fill="#3a3b3d"/></svg><span class="count">1</span></div>
  <i class="divider"></i>
  <div class="app run"><svg viewBox="0 0 62 62"><rect x="1" y="1" width="60" height="60" rx="14" fill="#050505" stroke="#bcc6cb" stroke-width="2.400"/><rect x="6.500" y="6.500" width="49" height="48" rx="8" fill="#1c1c1e"/><text x="10" y="24" class="prompt">&gt;_</text></svg></div>
  <div class="app run"><svg viewBox="0 0 62 62"><rect width="62" height="62" rx="14" fill="#fff"/><g stroke-width="9" stroke-linecap="round"><path d="M14 25h10.500" stroke="#36c5f0"/><path d="M25 14h.1" stroke="#36c5f0"/><path d="M37 14v10.500" stroke="#2eb67d"/><path d="M48 25h.1" stroke="#2eb67d"/><path d="M48 37H37.500" stroke="#ecb22e"/><path d="M37 48h.1" stroke="#ecb22e"/><path d="M25 48V37.500" stroke="#e01e5a"/><path d="M14 37h.1" stroke="#e01e5a"/></g></svg></div>
  <div class="app run"><svg viewBox="0 0 62 62"><circle cx="31" cy="31" r="31.500" fill="#1ed760"/><g fill="none" stroke="#121212" stroke-linecap="round"><path d="M13 19.500c12-4 27-2.500 38 3.500" stroke-width="6.500"/><path d="M14.500 30.500c11-3 23-1.500 32 3.500" stroke-width="5.500"/><path d="M16 40.500c9-2.500 19-1 27 3.500" stroke-width="4.500"/></g></svg></div>
  <div class="app run"><svg viewBox="0 0 62 62"><rect width="62" height="62" rx="8" fill="#fb4338"/><path d="M25 17l14 14-14 14-14-14z" fill="#fff"/><path d="M33 18l4-1 14 14-14 14-4-1 12-13z" fill="#fff"/></svg></div>
  <div class="app run"><svg viewBox="0 0 62 62"><rect width="62" height="62" rx="14" fill="#303135"/><circle cx="17" cy="17" r="9" fill="none" stroke="#232427" stroke-width="4"/><svg x="-3" y="-8" width="62" height="76"><use href="#guitar"/></svg></svg></div>
  <div class="app run"><svg viewBox="0 0 62 62"><rect width="62" height="62" rx="14" fill="#f7f7f7"/><svg x="2" y="2" width="58" height="58"><use href="#chrome"/></svg></svg></div>
  <div class="app run"><svg viewBox="0 0 62 62"><rect width="62" height="62" rx="14" fill="#fff"/><path d="M41 9l11 5v34l-11 5-23-21 0-2z" fill="#1a8fdc"/><path d="M41 20v22L26 31z" fill="#fff"/><path d="M9 24l4-3 28 24v8z" fill="#0a7ac6"/><path d="M9 38l4 3L41 17V9z" fill="#0065a9"/><path d="M41 9l11 5v34l-11 5z" fill="#27a3ee"/></svg></div>
  <i class="divider second"></i>
  <div class="app"><svg viewBox="0 0 62 62"><path d="M6-2h47v20H6z" fill="#cfd6de"/><path d="M9-2h36l9 14v45H13z" fill="#fff"/><path d="M13 6h24v12H13z" fill="#2b8be0"/><rect x="-1" y="15" width="64" height="38" fill="#fff"/><rect x="2" y="18" width="58" height="32" fill="#360d2c"/><path d="M2 18h58v3H2z" fill="#6d6a5c"/><path d="M6 25h20M6 29h26M6 33h16M10 37h14M6 41h20M6 45h12" stroke="#8b5f80" stroke-width="1.500"/></svg></div>
  <div class="app"><svg viewBox="0 0 62 62"><rect x="-6" y="7" width="74" height="48" rx="2" fill="#161616" stroke="#c9c9c9" stroke-width="1.600"/><path d="M0 13h12M14 16h26M-2 22h52M-2 25h58" stroke="#8c8c8c" stroke-width="1.200"/><path d="M-2 29h30M-2 33h34M-2 37h30M-2 41h32M-2 45h28M48 29h6M48 33h6M48 37h6M48 41h6M48 45h6" stroke="#3c3786" stroke-width="2.500"/><path d="M-2 50h60" stroke="#8c8c8c" stroke-width="1.200"/></svg></div>
  <div class="app"><svg viewBox="0 0 62 62"><rect x="-5" y="13" width="70" height="36" fill="#29292e"/><rect x="-5" y="13" width="14" height="36" fill="#4b494f"/><rect x="15" y="17" width="8" height="6" fill="#dfe7f2"/><rect x="15" y="23" width="8" height="2" fill="#2f7de0"/><rect x="40" y="42" width="24" height="22" rx="5" fill="#35363a"/><svg x="40" y="40" width="22" height="28"><use href="#guitar"/></svg></svg></div>
  <div class="app"><svg viewBox="0 0 62 62"><rect x="-3" y="27" width="68" height="7" fill="#26262a"/><path d="M-1 30.500h40" stroke="#8f8f8f" stroke-width="1"/><rect x="40" y="28" width="17" height="5" fill="#8ab4f8"/><rect x="42" y="42" width="23" height="23" rx="5" fill="#f7f7f7"/><svg x="43" y="43" width="21" height="21"><use href="#chrome"/></svg></svg></div>
  <div class="app"><svg viewBox="0 0 62 62"><path d="M6 8L14-5l9 4 8-5 10 6 8-3 8 13-10 6H15z" fill="#e9e9e9"/><path d="M4 4h54l-5 56c-1 5-43 5-44 0z" fill="url(#g-trash)" opacity=".93"/><path d="M5 3l10 3 6-5 8 6 9-6 6 5 11-3-2 8c-10 4-38 4-46 0z" fill="#dcdcdc"/><path d="M16 0l6 7-5 3zM38-2l8 8-9 4z" fill="#4a4a4a"/><path d="M25 2l6 4-5 4z" fill="#4fb8a8"/></svg></div>
</div>
</body>
</html>
```
FILE: styles.css
```
* { box-sizing: border-box; }
html, body { margin: 0; }
body {
  width: 2880px; height: 1800px; overflow: hidden; position: relative;
  display: flex; flex-direction: column;
  background: linear-gradient(90deg, #3a5670 0, #142848 400px, #100f2c 900px, #14122f 100%) 0 0/100% 90px no-repeat, linear-gradient(#12030a 1680px, #250109 1740px, #33020f 1800px);
  font-family: Inter, "Liberation Sans", sans-serif; font-weight: 500; color: #fff;
}
svg { display: block; flex: none; overflow: visible; }
.defs { position: absolute; }

/* macOS menu bar */
.menubar {
  height: 48px; flex: none; display: flex; justify-content: space-between; align-items: center;
  padding: 0 39px 0 44px; font-size: 26px; letter-spacing: -.7px; color: #ebebf0;
  background: linear-gradient(90deg, #1f456b 0, #1d3860 600px, #1b2350 1150px, #1c1a49 1700px, #1f1b4d 100%);
}
.menubar-left { display: flex; align-items: center; gap: 42px; }
.apple { margin: -4px 1px 0 0; }
.app-name { font-weight: 700; letter-spacing: 0; }
.menubar-right { display: flex; align-items: center; margin-top: -2px; }
.airpods { margin-right: 38px; }
.airdrop { margin-right: 41px; }
.bluetooth { margin-right: 40px; }
.battery { margin-right: 36px; }
.wifi { margin-right: 35px; }
.spotlight { margin-right: 39px; }
.switches { margin-right: 33px; }
.clock { display: flex; gap: 16px; letter-spacing: -.4px; margin-left: 34px; }

/* Terminal behind the browser */
.terminal-window {
  position: absolute; left: 1368px; top: 1680px; width: 1139px; height: 120px; overflow: hidden;
  background: linear-gradient(#050505, #1c1c1d 110px); border: solid #383838; border-width: 0 2px;
  font: 33px/40px "DejaVu Sans Mono", monospace; color: #dcdcdc; display: flex; align-items: flex-end; padding-left: 9px;
}
.terminal-window span { margin-bottom: -19px; }

/* Browser window */
.window {
  position: relative; margin-top: 2px; width: 2880px; height: 1636px; flex: none; display: flex; flex-direction: column;
  border-radius: 20px; overflow: hidden; background: #115297; box-shadow: 0 -1px 0 #000, 0 10px 50px 10px rgba(0,0,0,.75);
}
.window::after {
  content: ""; position: absolute; inset: 0; border: 2px solid rgba(160,190,225,.38); border-radius: 20px; pointer-events: none;
}
.tabstrip { height: 84px; flex: none; background: #0c345e; display: flex; padding-top: 16px; }
.lights { width: 186px; display: flex; gap: 16px; padding: 15px 0 0 42px; }
.lights i { width: 24px; height: 24px; border-radius: 50%; }
.red { background: #ff5f57; } .yellow { background: #febc2e; } .green { background: #28c840; }
.tab { width: 306px; position: relative; display: flex; align-items: center; padding: 0 21px 0 24px; font-size: 24px; letter-spacing: -.35px; }
.tab.sep::before, .tab.last::after { content: ""; position: absolute; left: 0; top: 15px; width: 2px; height: 40px; background: #58728f; }
.tab.last::after { left: 306px; }
.tab.active { background: #115297; border-radius: 16px 16px 0 0; }
.tab.active::before, .tab.active::after { content: ""; position: absolute; bottom: 0; width: 16px; height: 16px; }
.tab.active::before { left: -16px; background: radial-gradient(circle at 0 0, #0c345e 15.5px, #115297 16px); }
.tab.active::after { right: -16px; background: radial-gradient(circle at 100% 0, #0c345e 15.5px, #115297 16px); }
.tab-title { margin-left: 16px; width: 188px; white-space: nowrap; overflow: hidden; line-height: 34px; }
.tab-title.fade, .t-meet { -webkit-mask-image: linear-gradient(90deg, #000 70%, transparent 100%); mask-image: linear-gradient(90deg, #000 70%, transparent 100%); width: 178px; }
.t-meet { width: 134px; }
.fav { width: 32px; height: 32px; }
.rec { width: 24px; height: 24px; margin-left: 14px; }
.close { width: 18px; height: 18px; margin-left: auto; }
.s3 { font: 700 19px Inter, sans-serif; fill: #fff; }
.newtab { margin: 22px 0 0 34px; }
.tabmenu { margin: 29px 34px 0 auto; }
.toolbar { height: 72px; flex: none; display: flex; align-items: center; padding: 0 40px 0 30px; }
.toolbar > svg:nth-child(2) { margin-left: 36px; }
.toolbar > svg:nth-child(3) { margin-left: 37px; }
.omnibox { margin-left: 31px; width: 2384px; height: 56px; border-radius: 28px; background: #1a4272; display: flex; align-items: center; padding: 0 21px 0 23px; }
.url { font-size: 28px; font-weight: 400; color: #a3b3c7; margin: 0 auto 0 17px; letter-spacing: .03px; }
.url b { font-weight: 400; color: #fff; }
.omnibox > svg:nth-child(3) { margin-right: 38px; }
.puzzle { margin: 0 36px 0 28px; }
.avatar { width: 44px; height: 44px; border-radius: 50%; background: #8d6e63; font: 400 24px/44px Inter, sans-serif; text-align: center; margin: 0 38px 0 28px; }
.kebab { margin-left: auto; }
.bookmarks { height: 64px; flex: none; display: flex; align-items: center; padding: 0 0 10px 29px; font-size: 24px; letter-spacing: -.45px; gap: 35px; }
.bookmarks a { display: flex; align-items: center; gap: 17px; }
.bookmarks .maps { margin-left: 3px; gap: 16px; }
.bookmarks .youtube { gap: 15px; letter-spacing: -.95px; margin-left: -2px; }
.bookmarks .repo { letter-spacing: -.5px; margin-left: -1px; }

/* Application header */
.app-header { height: 114px; flex: none; border-top: 2px solid #4a7db3; background: #132b4f; display: flex; align-items: center; padding: 0 41px 0 48px; }
.wordmark { font: 300 34px/40px Lato, sans-serif; -webkit-text-stroke: .5px #45c5e8; letter-spacing: 5.2px; color: #45c5e8; margin: -1px auto 0 17px; }
.bell { margin-right: 83px; }
.burger { display: flex; flex-direction: column; gap: 15px; }
.burger i { width: 38px; height: 3px; background: #45c5e8; }
.crumbs { position: relative; z-index: 1; height: 80px; flex: none; background: #fff; border-bottom: 2px solid #dfdfe5; display: flex; align-items: center; padding-left: 64px; color: #75728f; font-size: 24px; font-weight: 600; gap: 24px; }
.crumbs .home { letter-spacing: .4px; }
.crumbs .cluster { letter-spacing: .6px; }

.page { position: relative; z-index: 1; flex: none; height: 1108px; display: flex; background: #fff; color: #19172c; font-size: 28px; font-weight: 300; }
.sidebar { width: 480px; padding-top: 61px; background: linear-gradient(200deg, #f8f8fb 0, #fbfbfb 350px, #fff 800px); display: flex; flex-direction: column; }
.sidenav { display: flex; flex-direction: column; gap: 20px; padding: 0 32px; border-bottom: 2px solid #dfdfe5; height: 769px; }
.sidenav a { height: 66px; line-height: 67px; padding-left: 32px; letter-spacing: .1px; }
.sidenav .settings { letter-spacing: .4px; }
.sidenav .current { background: #e8f4fa; color: #41506f; font-weight: 600; letter-spacing: -.3px; }
.health { display: flex; align-items: center; justify-content: space-between; padding: 0 48px 0 64px; height: 196px; }
.badge { width: 76px; height: 44px; border-radius: 22px; background: #7b1cfc; color: #fff; font: 500 20px/44px Inter, sans-serif; text-align: center; }
.content { flex: 1; }
.alert { width: 2268px; height: 70px; background: #ff005c; color: #ffe3ed; display: flex; align-items: center; gap: 11px; padding: 15px 0 0 40px; letter-spacing: -.3px; }
h1 { margin: 62px 0 0 62px; font-size: 62px; line-height: 80px; font-weight: 700; letter-spacing: -1.1px; }
.controls { display: flex; align-items: center; height: 64px; margin: 92px 0 0 64px; width: 2140px; letter-spacing: -.2px; }
.search { width: 550px; height: 64px; border: 2px solid #19172c; border-radius: 8px; display: flex; align-items: center; gap: 13px; padding-left: 24px; color: #8c8aa0; }
.toggle { width: 88px; height: 44px; border-radius: 22px; background: #00afba; margin: 0 16px 0 62px; display: flex; align-items: center; justify-content: space-between; padding: 0 6px 0 15px; }
.toggle i { width: 32px; height: 32px; border-radius: 50%; background: #fff; }
.add { margin-left: auto; width: 224px; height: 60px; border: 2px solid #006d94; border-radius: 8px; background: none; color: #006d94; font: 600 28px Inter, sans-serif; letter-spacing: .45px; display: flex; align-items: center; justify-content: center; gap: 13px; padding: 0 0 0 2px; }

.table { width: 2140px; margin: 40px 0 0 64px; border-top: 4px solid #dfdfe5; }
.thead, .row { display: grid; grid-template-columns: 660px 419px 245px 412px 404px; }
.thead { height: 108px; color: #000; font-weight: 600; letter-spacing: -.25px; }
.thead > div { border-bottom: 8px solid #dfdfe5; border-left: 2px solid #dfdfe5; padding: 29px 0 0 18px; display: flex; align-items: center; }
.thead > .name { border-bottom-color: #a9a7b9; border-left: 0; padding-left: 20px; }
.thead > .parts { letter-spacing: 0; padding-left: 20px; }
.thead > div:nth-child(n+4) { padding: 28px 0 0 19px; letter-spacing: -.15px; }
.thead small { font-size: 24px; font-weight: 500; color: #75728f; letter-spacing: .15px; margin: 2px 0 0 19px; }
.sort { margin: 3px 0 0 19px; }
.row { height: 96px; border-bottom: 2px solid #dfdfe5; letter-spacing: -.6px; }
.row > div { border-left: 2px solid #dfdfe5; padding-left: 20px; display: flex; align-items: center; }
.row > div:first-child { border-left: 0; }
.row > div:nth-child(n+4) { padding-left: 19px; }
.row a { font-weight: 500; letter-spacing: .34px; text-decoration: underline; text-decoration-thickness: 2px; text-underline-offset: 4px; text-decoration-skip-ink: none; }
.row a.long { letter-spacing: .63px; }
.row > .status { flex-direction: column; align-items: flex-start; justify-content: flex-start; padding-left: 19px; }
.status p { margin: 10px 0 0; line-height: 38px; display: flex; align-items: center; gap: 17px; letter-spacing: -.45px; }
.status p::before { content: ""; width: 14px; height: 14px; border-radius: 50%; background: #00afba; margin-top: 1px; }
.status small { font-size: 24px; line-height: 34px; font-weight: 400; color: #a9a7b9; margin-left: 30px; letter-spacing: -.3px; }
.scroll { height: 26px; padding-left: 660px; border-bottom: 2px solid #dfdfe5; }
.track { height: 24px; border-left: 2px solid #dfdfe5; background: #f7f7fa; padding: 6px 4px; }
.track i { display: block; width: 911px; height: 12px; border-radius: 6px; background: #a9a7b9; }
.link-status {
  position: absolute; left: 0; bottom: -1px; width: 834px; height: 44px; padding-left: 10px; border: 1px solid #27292c; border-left: 0; border-radius: 0 8px 0 0;
  background: #0c345e; color: #fff; font-size: 24px; font-weight: 500; line-height: 43px; letter-spacing: -.28px; box-shadow: 0 0 40px rgba(0,0,0,.45); white-space: nowrap;
}

.downloads { height: 114px; flex: none; border-top: 2px solid #3f75af; background: linear-gradient(#115297 40%, #11488a 100%); display: flex; align-items: center; padding: 0 26px 2px 0; }
.download { width: 474px; height: 88px; border-right: 2px solid #5583b8; display: flex; align-items: center; padding: 0 36px 0 45px; font-size: 26px; letter-spacing: -.33px; }
.download span { margin: 3px auto 0 31px; }
.show-all { margin-left: auto; width: 164px; height: 64px; border: 2px solid #2d4f78; border-radius: 8px; color: #a8c7fa; font: 600 24px/59px Inter, sans-serif; text-align: center; margin-right: 26px; }

/* Dock */
.dock {
  position: absolute; left: 62px; top: 1692px; width: 2756px; height: 98px; border: 2px solid rgba(255,255,255,.2); border-radius: 34px;
  display: flex; padding: 13px 0 0 4px;
  background: linear-gradient(90deg, #3d141b 0, #3d141b 1200px, #332321 1330px, #2d2b25 1440px, #2b2a2b 1650px, #2b2a2b 2360px, #3c141c 2540px);
}
.app { width: 80.95px; flex: none; position: relative; display: flex; justify-content: center; }
.app > svg { width: 62px; height: 62px; }
.app.run::after { content: ""; position: absolute; left: 50%; top: 71px; width: 8px; height: 8px; margin-left: -4px; border-radius: 50%; background: #b5a3a8; }
.divider { width: 2px; height: 70px; background: #6a686a; margin: -1px 14px 0 20px; }
.divider.second { margin: -1px 15px 0 19px; background: #746366; }
.count { position: absolute; right: 1px; top: -7px; width: 28px; height: 28px; border-radius: 50%; background: #fb4038; font: 400 20px/28px Inter, sans-serif; text-align: center; }
.count.wide { letter-spacing: -.5px; }
.cal-m { font: 500 15px Inter, sans-serif; fill: #fff; }
.cal-d { font: 300 36px Inter, sans-serif; fill: #222; }
.shield { font: 700 8px Inter, sans-serif; fill: #fff; }
.tv { font: 500 27px Inter, sans-serif; fill: #fff; }
.pages { font: 500 8px Inter, sans-serif; fill: #fff; }
.prompt { font: 700 15px "DejaVu Sans Mono", monospace; fill: #fff; }
```
